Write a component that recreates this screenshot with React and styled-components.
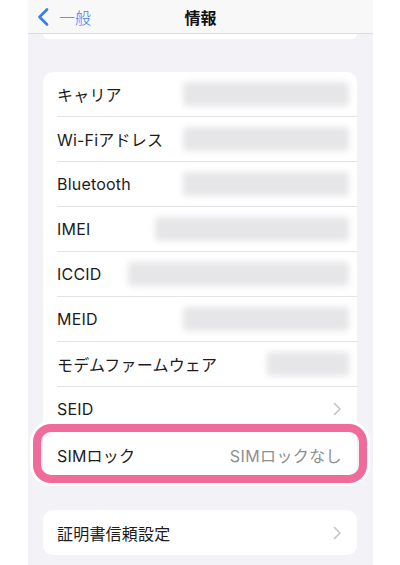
import React from 'react'
import styled, { createGlobalStyle } from 'styled-components'

const GlobalStyle = createGlobalStyle`
  html, body {
    margin: 0;
    padding: 0;
    background: #ffffff;
  }
  body {
    font-family: Inter, "Noto Sans CJK JP", sans-serif;
    -webkit-font-smoothing: antialiased;
  }
`

const Screen = styled.div`
  margin-left: 28px;
  width: 345px;
  min-height: 565px;
  background: #f2f2f7;
  display: flex;
  flex-direction: column;
`

const NavBar = styled.div`
  height: 34px;
  background: #f8f8f8;
  border-bottom: 1px solid #dcdcde;
  display: grid;
  grid-template-columns: 1fr auto 1fr;
  align-items: center;
  box-sizing: border-box;
`

const BackButton = styled.div`
  display: flex;
  align-items: center;
  gap: 10px;
  padding-left: 9px;
  color: #3a7bf0;
  font-size: 16px;
  font-family: "Noto Sans CJK JP", sans-serif;
  font-weight: 300;
  svg {
    display: block;
  }
`

const Title = styled.div`
  font-family: "Noto Sans CJK JP", sans-serif;
  font-weight: 700;
  font-size: 16px;
  color: #111;
`

const CardTail = styled.div`
  height: 5px;
  margin: 0 16px 0 15px;
  background: #ffffff;
  border-radius: 0 0 10px 10px;
`

const Card = styled.div`
  margin: ${p => p.$top}px 16px 0 15px;
  background: #ffffff;
  border-radius: 10px;
`

const Row = styled.div`
  position: relative;
  padding-left: 14px;
`

const RowInner = styled.div`
  height: 45px;
  display: flex;
  align-items: center;
  justify-content: space-between;
  padding-right: 15px;
  box-sizing: border-box;
  border-bottom: ${p => (p.$last ? 'none' : '1px solid #e3e3e6')};
`

const Label = styled.span`
  font-family: Inter, "Noto Sans CJK JP", sans-serif;
  font-size: 16px;
  color: #1c1c1e;
  letter-spacing: 0.2px;
`

const Value = styled.span`
  font-family: Inter, "Noto Sans CJK JP", sans-serif;
  font-size: 16px;
  color: #8e8e93;
  letter-spacing: 0.4px;
`

const Redacted = styled.div`
  width: ${p => p.$w}px;
  height: 24px;
  margin-right: -7px;
  border-radius: 4px;
  background: #e6e6e8;
  filter: blur(3px);
`

const Highlight = styled.div`
  position: absolute;
  top: -8px;
  bottom: -6px;
  left: -10px;
  right: -10px;
  border: 8px solid #f06a9a;
  border-radius: 18px;
  box-shadow: 0 0 0 3px #ffffff;
  pointer-events: none;
`

const Chevron = () => (
  <svg width="9" height="14" viewBox="0 0 9 14" fill="none">
    <path d="M1.5 1.5 L7 7 L1.5 12.5" stroke="#c4c4c7" strokeWidth="1.6" strokeLinecap="round" strokeLinejoin="round" />
  </svg>
)

const BackChevron = () => (
  <svg width="12" height="18" viewBox="0 0 12 18" fill="none">
    <path d="M10 1.5 L2.5 9 L10 16.5" stroke="#3a7bf0" strokeWidth="2.6" strokeLinecap="round" strokeLinejoin="round" />
  </svg>
)

const rows = [
  { label: 'キャリア', blur: 166 },
  { label: 'Wi-Fiアドレス', blur: 166 },
  { label: 'Bluetooth', blur: 166 },
  { label: 'IMEI', blur: 194 },
  { label: 'ICCID', blur: 221 },
  { label: 'MEID', blur: 166 },
  { label: 'モデムファームウェア', blur: 82 },
  { label: 'SEID', chevron: true },
  { label: 'SIMロック', value: 'SIMロックなし', highlight: true },
]

export default function App () {
  return (
    <>
      <GlobalStyle />
      <Screen>
        <NavBar>
          <BackButton>
            <BackChevron />
            <span>一般</span>
          </BackButton>
          <Title>情報</Title>
          <div />
        </NavBar>
        <CardTail />

        <Card $top={33}>
          {rows.map((r, i) => (
            <Row key={r.label}>
              <RowInner $last={i === rows.length - 1}>
                <Label>{r.label}</Label>
                {r.blur && <Redacted $w={r.blur} />}
                {r.chevron && <Chevron />}
                {r.value && <Value>{r.value}</Value>}
              </RowInner>
              {r.highlight && <Highlight />}
            </Row>
          ))}
        </Card>

        <Card $top={33}>
          <Row>
            <RowInner $last>
              <Label>証明書信頼設定</Label>
              <Chevron />
            </RowInner>
          </Row>
        </Card>
      </Screen>
    </>
  )
}
